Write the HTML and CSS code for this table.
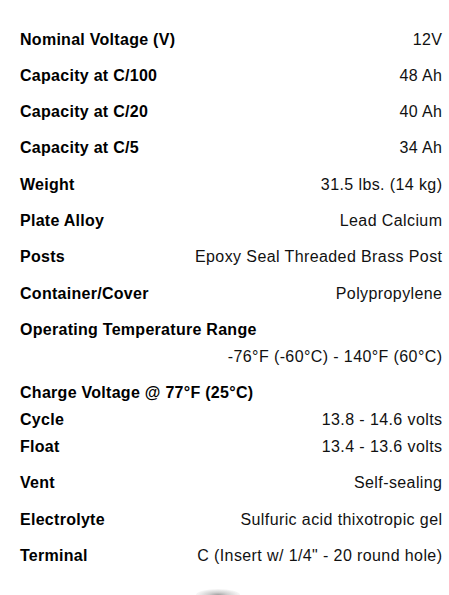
FILE: index.html
```html
<!DOCTYPE html>
<html>
<head>
<meta charset="utf-8">
<link rel="stylesheet" href="styles.css">
</head>
<body>
<div class="specs">
  <div class="group"><div class="row"><span class="label">Nominal Voltage (V)</span><span class="value">12V</span></div></div>
  <div class="group"><div class="row"><span class="label">Capacity at C/100</span><span class="value">48 Ah</span></div></div>
  <div class="group"><div class="row"><span class="label">Capacity at C/20</span><span class="value">40 Ah</span></div></div>
  <div class="group"><div class="row"><span class="label">Capacity at C/5</span><span class="value">34 Ah</span></div></div>
  <div class="group"><div class="row"><span class="label">Weight</span><span class="value">31.5 lbs. (14 kg)</span></div></div>
  <div class="group"><div class="row"><span class="label">Plate Alloy</span><span class="value">Lead Calcium</span></div></div>
  <div class="group"><div class="row"><span class="label">Posts</span><span class="value">Epoxy Seal Threaded Brass Post</span></div></div>
  <div class="group"><div class="row"><span class="label">Container/Cover</span><span class="value">Polypropylene</span></div></div>
  <div class="group">
    <div class="row"><span class="label">Operating Temperature Range</span></div>
    <div class="row"><span class="value">-76°F (-60°C) - 140°F (60°C)</span></div>
  </div>
  <div class="group">
    <div class="row"><span class="label">Charge Voltage @ 77°F (25°C)</span></div>
    <div class="row"><span class="label">Cycle</span><span class="value">13.8 - 14.6 volts</span></div>
    <div class="row"><span class="label">Float</span><span class="value">13.4 - 13.6 volts</span></div>
  </div>
  <div class="group"><div class="row"><span class="label">Vent</span><span class="value">Self-sealing</span></div></div>
  <div class="group"><div class="row"><span class="label">Electrolyte</span><span class="value">Sulfuric acid thixotropic gel</span></div></div>
  <div class="group"><div class="row"><span class="label">Terminal</span><span class="value">C (Insert w/ 1/4" - 20 round hole)</span></div></div>
</div>
<div class="photo"><div class="photo-top"></div></div>
</body>
</html>
```
FILE: styles.css
```css
html, body {
  margin: 0;
  padding: 0;
  background: #fff;
  height: 595px;
  overflow: hidden;
}
body {
  font-family: "Liberation Sans", Arial, sans-serif;
  font-size: 16px;
  color: #111;
}
.specs {
  padding: 25.5px 7px 0 20px;
  display: flex;
  flex-direction: column;
  gap: 9.3px;
}
.row {
  display: flex;
  justify-content: space-between;
  align-items: center;
  height: 27px;
  line-height: 27px;
}
.label {
  font-weight: bold;
  color: #000;
  letter-spacing: 0.28px;
}
.value {
  margin-left: auto;
  color: #111;
  letter-spacing: 0.4px;
  margin-right: -0.4px;
}
.photo {
  display: flex;
  justify-content: center;
  margin-top: 20px;
  padding-right: 14px;
}
.photo-top {
  width: 44px;
  height: 6px;
  border-radius: 50% 50% 0 0 / 100% 100% 0 0;
  background: radial-gradient(ellipse at 50% 100%, #777 0%, #bbb 30%, #eee 65%, #fff 100%);
  opacity: 0.7;
}
```
